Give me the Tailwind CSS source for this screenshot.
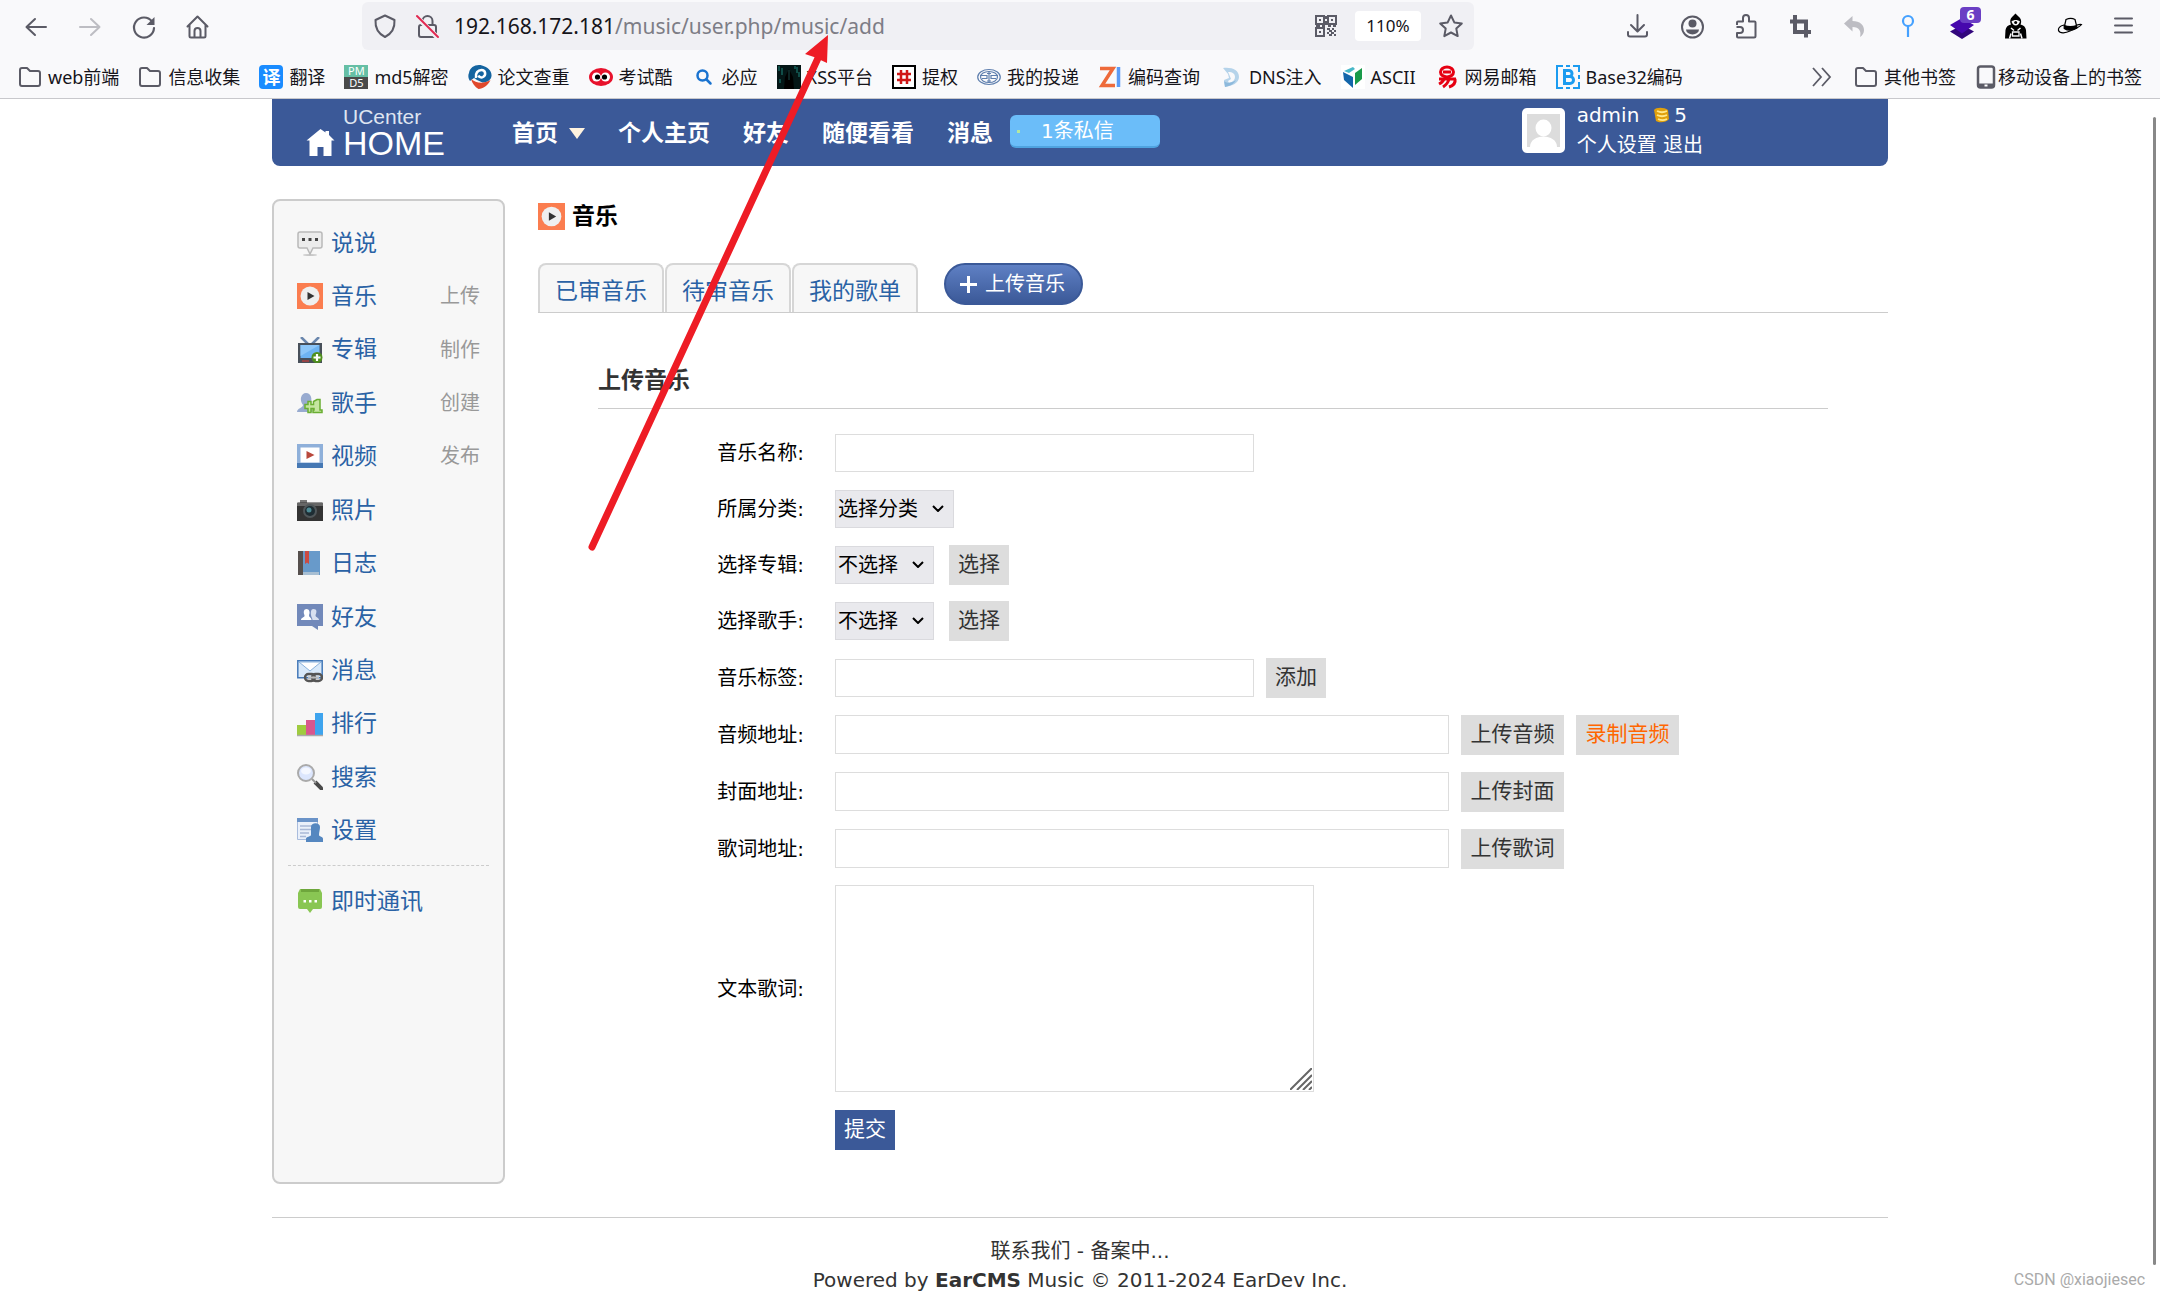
<!DOCTYPE html>
<html lang="zh-CN">
<head>
<meta charset="utf-8">
<title>音乐 - UCenter Home</title>
<script src="https://cdn.jsdelivr.net/npm/@tailwindcss/browser@4"></script>
</head>
<body class="relative min-h-screen overflow-x-hidden bg-white font-['DejaVu_Sans','Noto_Sans_CJK_SC',sans-serif] text-xl text-black">

<!-- Browser chrome -->
<div class="border-b border-[#c8c8cc] bg-[#f9f9fb] font-['Noto_Sans','Noto_Sans_CJK_SC',sans-serif] text-[#15141a]">
  <div class="flex h-[52px] items-center pr-[22px] pl-[22px]">
    <div class="flex w-[340px] shrink-0 items-center gap-[26px] text-[#5b5b66]">
      <button aria-label="后退"><svg class="size-7" viewBox="0 0 28 28" fill="none" stroke="currentColor" stroke-width="2" stroke-linecap="round" stroke-linejoin="round"><path d="M24 15H5M13 7l-8.500 8 8.500 8"/></svg></button>
      <button aria-label="前进" class="text-[#bdbdc3]"><svg class="size-7" viewBox="0 0 28 28" fill="none" stroke="currentColor" stroke-width="2" stroke-linecap="round" stroke-linejoin="round"><path d="M4 15h19M15 7l8.500 8-8.500 8"/></svg></button>
      <button aria-label="刷新"><svg class="size-7" viewBox="0 0 28 28" fill="none" stroke="currentColor" stroke-width="2.200" stroke-linecap="round"><path d="M22 9.500A10 10 0 1 0 24 16"/><path d="M24.500 5v8h-8z" fill="currentColor" stroke="none"/></svg></button>
      <button aria-label="主页"><svg class="size-7" viewBox="0 0 28 28" fill="none" stroke="currentColor" stroke-width="2" stroke-linejoin="round" stroke-linecap="round"><path d="M3.500 14.500L13.500 4.500l10 10M5.500 13v11a1.500 1.500 0 0 0 1.500 1.500h13a1.500 1.500 0 0 0 1.500-1.500V13M10.500 25v-6a3 3 0 0 1 6 0v6"/></svg></button>
    </div>
    <div class="flex h-12 min-w-0 grow items-center rounded-md bg-[#f0f0f4] pl-[10px] pr-[10px] text-[#5b5b66]">
      <svg class="size-[26px] shrink-0" viewBox="0 0 26 26" fill="none" stroke="currentColor" stroke-width="2" stroke-linejoin="round"><path d="M13 2.500l9.500 4.500c.5 8-2.500 13.500-9.500 17C6 20.500 3 15 3.500 7z"/></svg>
      <svg class="ml-4 size-[26px] shrink-0" viewBox="0 0 26 26" fill="none" stroke="currentColor" stroke-width="2" stroke-linecap="round"><rect x="5" y="12" width="17" height="12" rx="2"/><path d="M8.500 12V8a5 5 0 0 1 10 0v4"/><path d="M2 3l21 21" stroke="#f0f0f4" stroke-width="5"/><path d="M3 3l21 21" stroke="#e22850" stroke-width="2"/></svg>
      <input type="text" aria-label="地址" class="sr-only" value="192.168.172.181/music/user.php/music/add">
      <div class="ml-[14px] min-w-0 grow truncate pt-px text-[21px] text-[#7d7d86]"><span class="text-[#15141a]">192.168.172.181</span>/music/user.php/music/add</div>
      <svg class="size-[22px] shrink-0" viewBox="0 0 22 22" fill="none" stroke="currentColor" stroke-width="2"><rect x="1" y="1" width="8" height="8"/><rect x="13" y="1" width="8" height="8"/><rect x="1" y="13" width="8" height="8"/><path d="M4 5h2M16 5h2M4 17h2M11 1v3M11 6v4M1 11h4M7 11h3M13 11h3M18 11h3M12 14h3M17 14h2M14 16h3M19 16h2M12 18h2M16 18h3M14 20h3M19 20h2"/></svg>
      <button class="ml-[18px] h-[30px] w-[66px] rounded bg-white text-[17px] text-[#15141a]">110%</button>
      <button aria-label="收藏" class="ml-[17px]"><svg class="size-[26px]" viewBox="0 0 26 26" fill="none" stroke="currentColor" stroke-width="2" stroke-linejoin="round"><path d="M13 2.500l3.300 6.900 7.500 1-5.500 5.200 1.400 7.500L13 19.500l-6.700 3.600 1.400-7.500-5.500-5.200 7.500-1z"/></svg></button>
    </div>
    <div class="ml-[150px] flex shrink-0 items-center gap-[26px] text-[#5b5b66]">
      <button aria-label="下载"><svg class="size-7" viewBox="0 0 28 28" fill="none" stroke="currentColor" stroke-width="2" stroke-linecap="round" stroke-linejoin="round"><path d="M13.500 3v16M7 13l6.500 6.500 6.500-6.500M4 20v2.500a2 2 0 0 0 2 2h15a2 2 0 0 0 2-2V20"/></svg></button>
      <button aria-label="帐户"><svg class="size-7" viewBox="0 0 28 28" fill="none" stroke="currentColor" stroke-width="2"><circle cx="14.500" cy="15" r="10.500"/><circle cx="14.500" cy="11.500" r="4" fill="currentColor" stroke="none"/><path d="M8 17.500h13a6.500 5 0 0 1-13 0z" fill="currentColor" stroke="none"/></svg></button>
      <button aria-label="扩展"><svg class="size-7" viewBox="0 0 28 28" fill="none" stroke="currentColor" stroke-width="2" stroke-linejoin="round"><path d="M5 13V10.500a1 1 0 0 1 1-1h5V6a3 3 0 0 1 6 0v3.500h5.500a1 1 0 0 1 1 1v13.500a1.500 1.500 0 0 1-1.500 1.500H6a1 1 0 0 1-1-1V21h3a2.500 2.500 0 0 0 0-6H4.500"/></svg></button>
      <button aria-label="截图"><svg class="size-7" viewBox="0 0 28 28" fill="none" stroke="currentColor" stroke-width="4"><path d="M9 3v17h16M4 9.500h16v16"/></svg></button>
      <button aria-label="撤销" class="text-[#bdbdc3]"><svg class="size-7" viewBox="0 0 28 28" fill="currentColor"><path d="M4 11.500L12.500 4v5C20 9 24 13 24 18c0 3-1.500 5.500-4 7 1.500-5.500-.500-10-7.500-10v4.500z"/></svg></button>
      <button aria-label="标记" class="text-[#45a1ff]"><svg class="size-7" viewBox="0 0 28 28" fill="none" stroke="currentColor" stroke-width="2.200"><circle cx="14" cy="9" r="5"/><path d="M14 14V25"/></svg></button>
      <button aria-label="Wappalyzer" class="relative"><svg class="size-7" viewBox="0 0 28 28"><path d="M14 12l12 6.500L14 26 2 18.500z" fill="#32067c" transform="translate(0 1)"/><path d="M14 5l12 7-12 8.500L2 12z" fill="#4608ad" transform="translate(0 1)"/></svg><span class="absolute -top-[5px] right-[-5px] flex h-4 w-[21px] items-center justify-center rounded-sm bg-[#6b3fc4] text-sm font-bold text-white">6</span></button>
      <button aria-label="代理" class="text-black"><svg class="size-7" viewBox="0 0 28 28" fill="currentColor"><path d="M13.500 1.500l3 3c2.500 2 3.500 5 2 8 3 .5 5 2.500 5.500 5.500l.5 8.500H3L3.500 18c.5-3 2.500-5 5.500-5.500-1.500-3-1-6 1.500-8z"/><path d="M9.500 9.500c2.500-2 6-2 8.500 0-1 2.500-2.500 4-4.300 4s-3.400-1.500-4.200-4z" fill="#f9f9fb"/><circle cx="13.700" cy="10.500" r="1.500"/><path d="M7.500 26.500l1.500-5M20 26.500l-1.500-5M9 16l3 2.500M18.500 16l-3 2.500" fill="none" stroke="#f9f9fb" stroke-width="1.500"/><path d="M10.500 20h6.500v4h-6.500z" fill="none" stroke="#f9f9fb" stroke-width="1.300"/></svg></button>
      <button aria-label="HackBar" class="text-black"><svg class="size-7" viewBox="0 0 28 28" fill="none" stroke="currentColor" stroke-width="1.200"><path d="M8.500 14l1.500-6.500c3-1.500 6.500-1.500 9 0l1.500 6"/><path d="M8 13c-4 1-6 3-5.500 5.500C4 22 10 21 14 19s9-3 11.500-6.500c-1.500-.5-3 0-4.500.5"/><path d="M8.200 13.500c4 1.500 8.500 1.500 12.500 0v2.500c-4 2.500-9 2.800-12.500.5z" fill="currentColor"/></svg></button>
      <button aria-label="菜单"><svg class="size-7" viewBox="0 0 28 28" fill="none" stroke="currentColor" stroke-width="2" stroke-linecap="round"><path d="M5 6.500h17M5 13.500h17M5 20.500h17"/></svg></button>
    </div>
  </div>

  <!-- Bookmarks bar -->
  <div class="flex h-[46px] items-center gap-[19px] pl-[18px] pr-[18px] pt-1 text-lg whitespace-nowrap">
    <a href="#" class="flex items-center gap-[6px]"><svg class="size-6" viewBox="0 0 24 24" fill="none" stroke="#5b5b66" stroke-width="2" stroke-linejoin="round"><path d="M2 5a2 2 0 0 1 2-2h5l3 3h8a2 2 0 0 1 2 2V19a2 2 0 0 1-2 2H4a2 2 0 0 1-2-2z"/></svg>web前端</a>
    <a href="#" class="flex items-center gap-[6px]"><svg class="size-6" viewBox="0 0 24 24" fill="none" stroke="#5b5b66" stroke-width="2" stroke-linejoin="round"><path d="M2 5a2 2 0 0 1 2-2h5l3 3h8a2 2 0 0 1 2 2V19a2 2 0 0 1-2 2H4a2 2 0 0 1-2-2z"/></svg>信息收集</a>
    <a href="#" class="flex items-center gap-[6px]"><span class="flex size-6 items-center justify-center rounded bg-[#1a8cff] text-lg leading-6 font-bold text-white">译</span>翻译</a>
    <a href="#" class="flex items-center gap-[6px]"><span class="flex size-6 flex-col text-center text-[11px] leading-3 text-white"><span class="bg-[#66bfa5]">PM</span><span class="bg-[#4a4a4a]">D5</span></span>md5解密</a>
    <a href="#" class="flex items-center gap-[6px]"><svg class="size-6" viewBox="0 0 24 24"><path d="M1 8C2 2 8-1 14 .5 20 2 24 6 23.500 11c-.5 4-4 6.500-9 6.500L9 15l-3-2-4 3C0 13 0 10 1 8z" fill="#1464a0"/><path d="M3 14c5 4 12 5.500 19.500 1C20 21 15 23.500 10.500 24 7 22 4 18 3 14z" fill="#e0482c"/><path d="M8 13c-1-5 2-8 5.500-8 4 0 5 5 1.500 7-2 1-4 0-4.500-1.500" fill="none" stroke="#fff" stroke-width="2.500"/></svg>论文查重</a>
    <a href="#" class="flex items-center gap-[6px]"><svg class="size-6" viewBox="0 0 24 24"><ellipse cx="12" cy="12" rx="12" ry="9" fill="#e8122c"/><circle cx="7.500" cy="12" r="4.500" fill="#fff"/><circle cx="16.500" cy="12" r="4.500" fill="#fff"/><circle cx="8.500" cy="12" r="2.600"/><circle cx="15.500" cy="12" r="2.600"/></svg>考试酷</a>
    <a href="#" class="flex items-center gap-[6px]"><svg class="size-6" viewBox="0 0 24 24" fill="none" stroke="#1a73d0" stroke-width="2.500" stroke-linecap="round"><circle cx="10.500" cy="10.500" r="5"/><path d="M14.500 14.500l4 4"/></svg>必应</a>
    <a href="#" class="flex items-center gap-[6px]"><svg class="size-6" viewBox="0 0 24 24"><path d="M0 0h24v24H0z" fill="#041616"/><path d="M2 1v5M5 3v7M20 2v6M22 7v5M3 14v4M18 1v3" stroke="#14605a" stroke-width="1.500"/><path d="M7 24l1-12 4-8 4 8 1 12z" fill="#000"/><path d="M12 5v10" stroke="#1b4b48"/></svg>XSS平台</a>
    <a href="#" class="flex items-center gap-[6px]"><svg class="size-6" viewBox="0 0 24 24" fill="none"><path d="M1 1h22v22H1z" fill="#fff" stroke="#000" stroke-width="2"/><path d="M9 5v14M15 5v14M5 9h14M5 15h14" stroke="#d01818" stroke-width="2.500"/></svg>提权</a>
    <a href="#" class="flex items-center gap-[6px]"><svg class="size-6" viewBox="0 0 24 24" fill="none" stroke="#5f7fae" stroke-width="1.200"><ellipse cx="12" cy="12" rx="11.300" ry="7.500"/><ellipse cx="12" cy="12" rx="8.500" ry="5.500"/><path d="M3 10.500h7v3H5M21 10.500h-7v3h5M12 6v12M10 8.500h4M10 16h4"/></svg>我的投递</a>
    <a href="#" class="flex items-center gap-[6px]"><svg class="size-6" viewBox="0 0 24 24" fill="none" stroke-width="3.500"><path d="M2 3.500h13L4 20.500h13" stroke="#ee6a3a"/><path d="M20.500 2v20" stroke="#5b9bf6"/></svg>编码查询</a>
    <a href="#" class="flex items-center gap-[6px]"><svg class="size-6" viewBox="0 0 24 24"><path d="M4 3c9-1 16 2 16 9 0 6-7 9-14 10l-1-7 5-2-1-4z" fill="#b5d3ea"/><path d="M9 7c5 0 7 2 7 5s-2 5-6 6l-1-2 3-2-2-5z" fill="#f9f9fb"/><path d="M5 16c3 3 8 2 12-1-2 4-6 6-11 7z" fill="#8db9dc"/></svg>DNS注入</a>
    <a href="#" class="flex items-center gap-[6px]"><svg class="size-6" viewBox="0 0 24 24"><path d="M0 0h24v24H0z" fill="#fff"/><path d="M2 7l10 5v11L3 15z" fill="#1466aa"/><path d="M3 6l9-4 2 2-6 4z" fill="#48b8c8"/><path d="M14 8l7-5v11l-7 6z" fill="#1a9a4a"/></svg>ASCII</a>
    <a href="#" class="flex items-center gap-[6px]"><svg class="size-6" viewBox="0 0 24 24" fill="none" stroke="#e60012" stroke-width="3"><ellipse cx="12" cy="7" rx="6.500" ry="5"/><path d="M8 7h8M4 14h17M9 14c-1 3-3 4-5 5M14 14c-1 4-3 6-6 8M20 14c1 5-3 7-6 8"/></svg>网易邮箱</a>
    <a href="#" class="flex items-center gap-[6px]"><svg class="size-6" viewBox="0 0 24 24" fill="none" stroke="#1c9cf0" stroke-width="2"><path d="M7 1H1v22h6M17 1h6v6M17 23h6v-6M10 1h4M10 23h4M23 10v4"/><path d="M8.500 5.500H13a3 3 0 0 1 0 6H8.500zM8.500 11.500H14a3.500 3.500 0 0 1 0 7H8.500z" stroke-width="3"/></svg>Base32编码</a>
    <div class="ml-auto flex items-center gap-5">
      <button aria-label="更多书签"><svg class="size-6" viewBox="0 0 24 24" fill="none" stroke="#5b5b66" stroke-width="1.800"><path d="M3 3l8 9-8 9M12 3l8 9-8 9"/></svg></button>
      <a href="#" class="flex items-center gap-[6px]"><svg class="size-6" viewBox="0 0 24 24" fill="none" stroke="#5b5b66" stroke-width="2" stroke-linejoin="round"><path d="M2 5a2 2 0 0 1 2-2h5l3 3h8a2 2 0 0 1 2 2V19a2 2 0 0 1-2 2H4a2 2 0 0 1-2-2z"/></svg>其他书签</a>
      <a href="#" class="flex items-center gap-[2px]"><svg class="h-6 w-5" viewBox="0 0 20 24" fill="none" stroke="#5b5b66" stroke-width="2.500"><rect x="2" y="1.500" width="16" height="21" rx="2.500"/><path d="M2 20.500h16" stroke-width="4"/><path d="M8.500 20.500h3" stroke="#fff" stroke-width="2"/></svg>移动设备上的书签</a>
    </div>
  </div>
</div>

<!-- Page -->
<div class="mx-auto w-full max-w-[1616px]">
  <header class="flex h-[67px] rounded-b-lg bg-[#3b5998] pl-[34px] text-white">
    <a href="#" class="flex w-[206px] items-end gap-[8px] pb-2 font-['Liberation_Sans',sans-serif]" aria-label="UCenter Home">
      <svg class="mb-px size-[29px]" viewBox="0 0 29 29" fill="#fff"><path d="M14.500 1l5 3.500V3h3.500v4l5.500 5.500H25.500v15.500h-8V19h-6v9H3.500V12.500H.5z"/></svg>
      <span class="flex flex-col text-[#dfe5f1]"><span class="text-[21px] leading-[22px]">UCenter</span><span class="text-[34px] leading-[30px] text-white">HOME</span></span>
    </a>
    <nav class="flex items-center gap-[33px] pt-px text-[23px] font-bold">
      <a href="#" class="flex items-center gap-[11px]">首页<svg class="h-[11px] w-4" viewBox="0 0 16 11"><path d="M0 0h16L8 11z" fill="#fff3df"/></svg></a>
      <a href="#">个人主页</a>
      <a href="#">好友</a>
      <a href="#">随便看看</a>
      <div class="flex items-center gap-[17px]"><a href="#">消息</a>
        <a href="#" class="relative -mt-1 h-[33px] w-[150px] rounded-md border-b-2 border-[#4fa3e0] bg-[#6bbdf9] pl-[31px] text-xl leading-[33px] font-normal">1条私信<span class="absolute top-[15px] left-[7px] size-[3px] bg-[#b5e8a0]"></span></a>
      </div>
    </nav>
    <div class="mr-[185px] ml-auto flex items-center gap-3 text-xl leading-[30px]">
      <svg class="-mt-1 h-[45px] w-[43px]" viewBox="0 0 43 45"><rect width="43" height="45" rx="5" fill="#fff"/><path d="M5 6h33v33H5z" fill="#dcdcdc"/><ellipse cx="21.500" cy="20" rx="8" ry="8.500" fill="#fff"/><path d="M8 39c0-14 27-14 27 0z" fill="#fff"/></svg>
      <div class="-mt-[5px]">
        <div class="flex items-center"><a href="#">admin</a><svg class="mr-1 ml-[14px] h-4 w-[17px]" viewBox="0 0 17 16"><path d="M1 3c2-3 10-3 14 0l1 9c-3 4-10 4-13 2z" fill="#e0a00c"/><path d="M4 4c3 1.500 7 1.500 10 0M4 8c3 1.500 7 1.500 10 0M5 12c3 1.500 7 1 9 0" fill="none" stroke="#ffe88a" stroke-width="1.800"/></svg>5</div>
        <div><a href="#">个人设置</a> <a href="#">退出</a></div>
      </div>
    </div>
  </header>

  <div class="flex gap-[33px] pt-[33px]">
    <aside class="min-h-[985px] w-[233px] shrink-0 rounded-lg border-2 border-[#ccc] bg-[#f7f7f7] px-[14px] pt-[15px] text-[23px] text-[#2a62a5]">
      <ul class="flex h-[650px] flex-col border-b border-dashed border-[#ccc] pb-2 pl-[9px] pr-[9px] *:flex *:flex-1 *:items-center">
        <li><svg class="mr-2 size-[26px]" viewBox="0 0 26 26"><ellipse cx="13" cy="25" rx="7" ry="1" fill="#c8c8c8"/><path d="M3 2h20a2 2 0 0 1 2 2v12a2 2 0 0 1-2 2h-7l-3 6-3-6H3a2 2 0 0 1-2-2V4a2 2 0 0 1 2-2z" fill="#ececec" stroke="#b9b9b9" stroke-width="1.500"/><path d="M5 8h3v3H5zM11.500 8h3v3h-3zM18 8h3v3h-3z" fill="#444"/></svg><a href="#">说说</a></li>
        <li><svg class="mr-2 size-[26px]" viewBox="0 0 26 26"><path d="M0 0h26v26H0z" fill="#fb7d4f"/><circle cx="13" cy="13" r="9.500" fill="#efefef"/><path d="M10.500 9l7 4-7 4z" fill="#333"/></svg><a href="#">音乐</a><a href="#" class="ml-auto text-xl text-[#999]">上传</a></li>
        <li><svg class="mr-2 size-[26px]" viewBox="0 0 26 26"><path d="M4 0l7 7M22 0l-7 7" stroke="#6b87ad" stroke-width="2.500"/><path d="M1 6h24v20H1z" fill="#48505a"/><path d="M3.500 8h19v13h-19z" fill="#6db3f2"/><path d="M3.500 8h19L3.500 19z" fill="#8cc6f8"/><path d="M5 24h7" stroke="#b04040" stroke-width="1.500"/><circle cx="20" cy="20.500" r="5.500" fill="#4f8f1e"/><path d="M20 17v7M16.500 20.500h7" stroke="#fff" stroke-width="2.200"/></svg><a href="#">专辑</a><a href="#" class="ml-auto text-xl text-[#999]">制作</a></li>
        <li><svg class="mr-2 size-[26px]" viewBox="0 0 26 26"><path d="M0 22c0-4 6-4 6-7-4-5-2-12 3-12s7 6 4 12l2 3v4z" fill="#98abd0"/><path d="M16 22.500h9V20h-2V9.500h-3l-3.500 2v3H14v-3h-3v3H8v4h3v4h3v-4h3V20h-1z" fill="#c5e6a0" stroke="#6aae32" stroke-width="1.500"/></svg><a href="#">歌手</a><a href="#" class="ml-auto text-xl text-[#999]">创建</a></li>
        <li><svg class="mr-2 size-[26px]" viewBox="0 0 26 26"><path d="M0 1h26v19H0z" fill="#8fb0da"/><path d="M0 20h26v5H0z" fill="#4678b4"/><path d="M3.500 4.500h19v15h-19z" fill="#fff"/><path d="M9.500 8l8 4-8 4z" fill="#b9483c"/></svg><a href="#">视频</a><a href="#" class="ml-auto text-xl text-[#999]">发布</a></li>
        <li><svg class="mr-2 size-[26px]" viewBox="0 0 26 26"><path d="M3 3h7v3H3z" fill="#777"/><path d="M1 5.500h24a1 1 0 0 1 1 1V24H0V6.500a1 1 0 0 1 1-1z" fill="#333"/><path d="M0 6h26v3H0z" fill="#666"/><circle cx="13" cy="14" r="7" fill="#50575a"/><circle cx="13" cy="14" r="5" fill="#1e2d33"/><circle cx="12" cy="13" r="2.500" fill="#4d8a94"/></svg><a href="#">照片</a></li>
        <li><svg class="mr-2 size-[26px]" viewBox="0 0 26 26"><path d="M1 1h22v24H1z" fill="#689aca"/><path d="M1 1h5v24H1z" fill="#56504e"/><path d="M6 22h16v3H6z" fill="#a8bfd3"/><path d="M8 1h4v13l-2-1.500L8 14z" fill="#cc4b42"/></svg><a href="#">日志</a></li>
        <li><svg class="mr-2 size-[26px]" viewBox="0 0 26 26"><path d="M0 0h26v22h-5v4l-6-4H0z" fill="#7289ba"/><path d="M4 16c0-3 4-2 3.500-5C6 8 7 5 9.500 5s4 3 2.500 6c0 3 2.500 2 2.500 5z" fill="#fff"/><path d="M15.500 16c0-2-1.500-3-1.500-5 0-1-1-6 2.500-6S20 8 18.500 11c0 3 3.500 2 3.500 5z" fill="#d8e0f0"/></svg><a href="#">好友</a></li>
        <li><svg class="mr-2 size-[26px]" viewBox="0 0 26 26"><path d="M.8 3.800h24.400v17H.8z" fill="#d8e9fa" stroke="#4479b8" stroke-width="1.500"/><path d="M2 5l11 9L24 5z" fill="#fff" stroke="#8ab2dc"/><g fill="none" stroke="#555" stroke-width="2.500"><rect x="8" y="17" width="10" height="7" rx="3.500"/><rect x="15" y="17" width="10" height="7" rx="3.500"/></g><path d="M11 20.500h11" stroke="#bbb" stroke-width="2"/></svg><a href="#">消息</a></li>
        <li><svg class="mr-2 size-[26px]" viewBox="0 0 26 26"><path d="M0 14h9v10H0z" fill="#9fcb3f"/><path d="M9 9h9v15H9z" fill="#d8568e"/><path d="M18 2h8v22h-8z" fill="#3ea4ee"/><path d="M0 24.500h26" stroke="#aaa" stroke-width="1.500"/></svg><a href="#">排行</a></li>
        <li><svg class="mr-2 size-[26px]" viewBox="0 0 26 26"><path d="M18 18l8 8" stroke="#4a4a4a" stroke-width="4"/><path d="M15 15l4 4" stroke="#999" stroke-width="2"/><circle cx="9" cy="9" r="8" fill="#dce6fd" stroke="#aaa" stroke-width="2"/><ellipse cx="9" cy="7" rx="5" ry="3.500" fill="#f4f7ff"/></svg><a href="#">搜索</a></li>
        <li><svg class="mr-2 size-[26px]" viewBox="0 0 26 26"><path d="M.5 1.500h20v21H.5z" fill="#eaf0fa" stroke="#a9bcdd"/><path d="M0 1h21v4H0z" fill="#6a93c8"/><path d="M3 9h12M3 12.500h11M3 16h9M3 19.500h6" stroke="#a9b8d6" stroke-width="1.500"/><path d="M14 10c0-5 9-5 9 0 0 3-1 5-1 8 0 2 4 1 4 4v3H9v-3c0-3 5-2 5-4 0-3 0-5 0-8z" fill="#5587c0"/></svg><a href="#">设置</a></li>
      </ul>
      <div class="flex h-[70px] items-center pl-[9px]"><svg class="mr-2 size-[26px]" viewBox="0 0 26 26"><path d="M3 1h20l2 4v14a2 2 0 0 1-2 2h-7l-3 4-3-4H3a2 2 0 0 1-2-2V5z" fill="#89c653"/><path d="M4 1h18v3H4z" fill="#6ea63c"/><path d="M6.500 12h2.500v2.500H6.500zM12 12h2.500v2.500H12zM17.500 12H20v2.500h-2.500z" fill="#fff"/></svg><a href="#">即时通讯</a></div>
    </aside>

    <main class="min-w-0 grow">
      <h1 class="flex h-[34px] items-center gap-[7px] text-[23px] leading-[32px] font-bold"><svg class="size-[27px]" viewBox="0 0 26 26"><path d="M0 0h26v26H0z" fill="#fb7d4f"/><circle cx="13" cy="13" r="9.500" fill="#efefef"/><path d="M10.500 9l7 4-7 4z" fill="#333"/></svg>音乐</h1>
      <div class="mt-[30px] flex items-end gap-px border-b border-[#ccc] text-[23px] text-[#2a62a5]">
        <a href="#" class="flex h-[49px] w-[126px] items-center justify-center rounded-t-lg border-2 border-b-0 border-[#d6d6d6] bg-[#f7f7f7] pt-[6px]">已审音乐</a>
        <a href="#" class="flex h-[49px] w-[126px] items-center justify-center rounded-t-lg border-2 border-b-0 border-[#d6d6d6] bg-[#f7f7f7] pt-[6px]">待审音乐</a>
        <a href="#" class="flex h-[49px] w-[126px] items-center justify-center rounded-t-lg border-2 border-b-0 border-[#d6d6d6] bg-[#f7f7f7] pt-[6px]">我的歌单</a>
        <a href="#" class="mb-[7px] ml-[25px] flex h-[42px] w-[139px] items-center gap-2 rounded-full border-2 border-[#3b5998] bg-linear-to-b from-[#5f80c4] to-[#3b5998] pl-[14px] text-xl text-white"><svg class="size-[17px]" viewBox="0 0 17 17" stroke="#fff" stroke-width="3"><path d="M8.500 0v17M0 8.500h17"/></svg>上传音乐</a>
      </div>

      <form class="px-[60px] pt-[50px]">
        <h2 class="border-b border-[#ccc] pb-[11px] text-[23px] leading-[34px] font-bold text-[#333]">上传音乐</h2>
        <div class="mt-4 flex flex-col">
          <div class="flex h-14 items-center"><label for="name" class="w-[208px] pr-[2px] text-right">音乐名称:</label><input id="name" type="text" class="ml-[29px] h-[38px] w-[419px] border border-[#ddd] px-1"></div>
          <div class="flex h-14 items-center"><label for="cat" class="w-[208px] pr-[2px] text-right">所属分类:</label><div class="relative ml-[29px]"><select id="cat" class="h-[38px] w-[119px] appearance-none border border-[#dadade] bg-[#e9e9ed] pl-[2px]"><option>选择分类</option></select><svg class="pointer-events-none absolute top-[15px] right-[10px] h-[7px] w-3" viewBox="0 0 12 7" fill="none" stroke="#000" stroke-width="2"><path d="M1 1l5 5 5-5"/></svg></div></div>
          <div class="flex h-14 items-center"><label for="album" class="w-[208px] pr-[2px] text-right">选择专辑:</label><div class="relative ml-[29px]"><select id="album" class="h-[38px] w-[99px] appearance-none border border-[#dadade] bg-[#e9e9ed] pl-[2px]"><option>不选择</option></select><svg class="pointer-events-none absolute top-[15px] right-[10px] h-[7px] w-3" viewBox="0 0 12 7" fill="none" stroke="#000" stroke-width="2"><path d="M1 1l5 5 5-5"/></svg></div><button type="button" class="ml-[15px] h-10 w-[60px] bg-[#ddd] text-[21px] text-[#333]">选择</button></div>
          <div class="flex h-14 items-center"><label for="singer" class="w-[208px] pr-[2px] text-right">选择歌手:</label><div class="relative ml-[29px]"><select id="singer" class="h-[38px] w-[99px] appearance-none border border-[#dadade] bg-[#e9e9ed] pl-[2px]"><option>不选择</option></select><svg class="pointer-events-none absolute top-[15px] right-[10px] h-[7px] w-3" viewBox="0 0 12 7" fill="none" stroke="#000" stroke-width="2"><path d="M1 1l5 5 5-5"/></svg></div><button type="button" class="ml-[15px] h-10 w-[60px] bg-[#ddd] text-[21px] text-[#333]">选择</button></div>
          <div class="flex h-[57px] items-center"><label for="tags" class="w-[208px] pr-[2px] text-right">音乐标签:</label><input id="tags" type="text" class="ml-[29px] h-[38px] w-[419px] border border-[#ddd] px-1"><button type="button" class="ml-3 h-10 w-[60px] bg-[#ddd] text-[21px] text-[#333]">添加</button></div>
          <div class="flex h-[57px] items-center"><label for="audio" class="w-[208px] pr-[2px] text-right">音频地址:</label><input id="audio" type="text" class="ml-[29px] h-[39px] w-[614px] border border-[#ddd] px-1"><button type="button" class="ml-3 h-10 w-[103px] bg-[#ddd] text-[21px] text-[#333]">上传音频</button><button type="button" class="ml-3 h-10 w-[103px] bg-[#ddd] text-[21px] text-[#f60]">录制音频</button></div>
          <div class="flex h-[57px] items-center"><label for="cover" class="w-[208px] pr-[2px] text-right">封面地址:</label><input id="cover" type="text" class="ml-[29px] h-[39px] w-[614px] border border-[#ddd] px-1"><button type="button" class="ml-3 h-10 w-[103px] bg-[#ddd] text-[21px] text-[#333]">上传封面</button></div>
          <div class="flex h-[57px] items-center"><label for="lrc" class="w-[208px] pr-[2px] text-right">歌词地址:</label><input id="lrc" type="text" class="ml-[29px] h-[39px] w-[614px] border border-[#ddd] px-1"><button type="button" class="ml-3 h-10 w-[103px] bg-[#ddd] text-[21px] text-[#333]">上传歌词</button></div>
          <div class="flex items-center py-[8px]"><label for="text" class="w-[208px] pr-[2px] text-right">文本歌词:</label><div class="relative ml-[29px]"><textarea id="text" class="block h-[207px] w-[479px] resize-none border border-[#ddd] p-1"></textarea><svg class="pointer-events-none absolute right-[2px] bottom-[2px] size-[22px]" viewBox="0 0 22 22" stroke="#666" stroke-width="2"><path d="M0 22L22 0M7 22L22 7M13 22l9-9M19 22l3-3"/></svg></div></div>
          <div class="pt-[10px] pl-[237px]"><button type="button" class="h-10 w-[60px] bg-[#3b5998] text-[21px] text-white">提交</button></div>
        </div>
      </form>
    </main>
  </div>

  <footer class="mt-[33px] border-t border-[#ccc] pt-[19px] text-center leading-[29px] text-[#333]">
    <p><a href="#">联系我们</a> - <a href="#">备案中...</a></p>
    <p>Powered by <b>EarCMS</b> Music © 2011-2024 EarDev Inc.</p>
  </footer>
</div>

<!-- Overlays: scrollbar thumb, annotation arrow, watermark -->
<div class="absolute top-[117px] right-1 bottom-[33px] w-[3px] rounded bg-[#888]"></div>
<svg class="pointer-events-none absolute top-[34px] left-[586px] h-[520px] w-[246px]" viewBox="586 34 246 520"><path d="M592 547L819 56" stroke="#ee1c25" stroke-width="7" stroke-linecap="round"/><path d="M828 35l-23 19 9 3 13 6z" fill="#ee1c25"/></svg>
<div class="absolute right-[15px] bottom-2 font-['Roboto',sans-serif] text-base leading-5 text-[#aaa]">CSDN @xiaojiesec</div>
</body>
</html>
